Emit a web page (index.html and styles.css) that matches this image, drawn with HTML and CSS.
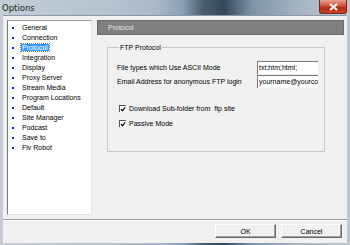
FILE: index.html
```html
<!DOCTYPE html>
<html lang="en">
<head>
    <meta charset="UTF-8">
    <title>Options</title>
    <link rel="stylesheet" href="styles.css">
</head>
<body>
    <div class="window">
        <!-- title bar -->
        <div class="titlebar">
            <span class="title">Options</span>
            <span class="close-btn">
                <svg width="9" height="8" viewBox="0 0 9 8"><path d="M1 1 L8 7 M8 1 L1 7" stroke="#fff" stroke-width="2"/></svg>
            </span>
        </div>
        <div class="client">
            <div class="main">
                <!-- page list -->
                <ul class="nav">
                    <li>General</li>
                    <li>Connection</li>
                    <li class="active"><span>Protocol</span></li>
                    <li>Integration</li>
                    <li>Display</li>
                    <li>Proxy Server</li>
                    <li>Stream Media</li>
                    <li>Program Locations</li>
                    <li>Default</li>
                    <li>Site Manager</li>
                    <li>Podcast</li>
                    <li>Save to</li>
                    <li>Flv Robot</li>
                </ul>
                <!-- page -->
                <div class="panel">
                    <div class="panel-head">Protocol</div>
                    <fieldset class="group">
                        <legend>FTP Protocol</legend>
                        <div class="field-row">
                            <label>File types which Use ASCII Mode</label>
                            <div class="input">txt;htm;html;</div>
                        </div>
                        <div class="field-row">
                            <label>Email Address for anonymous FTP login</label>
                            <div class="input">yourname@yourco</div>
                        </div>
                        <div class="check-row first">
                            <span class="check"><svg width="7" height="7" viewBox="0 0 7 7"><path d="M1 3 L3 5 L6 1" stroke="#000" stroke-width="1.4" fill="none"/></svg></span>
                            <span>Download Sub-folder from&nbsp; ftp site</span>
                        </div>
                        <div class="check-row">
                            <span class="check"><svg width="7" height="7" viewBox="0 0 7 7"><path d="M1 3 L3 5 L6 1" stroke="#000" stroke-width="1.4" fill="none"/></svg></span>
                            <span>Passive Mode</span>
                        </div>
                    </fieldset>
                </div>
            </div>
            <div class="separator"></div>
            <div class="buttons">
                <button class="btn">OK</button>
                <button class="btn">Cancel</button>
            </div>
        </div>
    </div>
</body>
</html>
```

FILE: styles.css
```css
/*global*/
* {
    margin: 0;
    padding: 0;
    box-sizing: border-box;
}

body {
    width: 350px;
    height: 245px;
    overflow: hidden;
    font-family: "Liberation Sans", Arial, sans-serif;
    font-size: 7px;
    color: #000;
}

/*window*/
.window {
    width: 350px;
    height: 245px;
    display: flex;
    flex-direction: column;
    background: linear-gradient(90deg, #c3ccd6 0%, #b7c3cf 30%, #a9b8c8 45%, #8aa0b6 52%, #4b5d70 58%, #34465a 64%, #7f93a8 72%, #a6b4c2 85%, #c0c9d2 100%);
    padding: 0 3px 2px 3px;
}

.titlebar {
    height: 15px;
    display: flex;
    align-items: center;
    justify-content: space-between;
    margin: 0 -3px;
    padding-left: 2px;
}

.title {
    font-family: "DejaVu Sans", sans-serif;
    font-size: 8.5px;
    color: #1e1e1e;
}

.close-btn {
    width: 28px;
    height: 14px;
    margin-right: 3px;
    align-self: flex-start;
    display: flex;
    align-items: center;
    justify-content: center;
    background: linear-gradient(#e8a191 0%, #d0533a 45%, #bb2a12 60%, #c8432c 100%);
    border: 1px solid #6b2a20;
    border-top: 0;
    border-radius: 0 0 3px 3px;
}

.client {
    flex: 1;
    background: #f0f0f0;
    display: flex;
    flex-direction: column;
    padding-top: 4px;
    border-top: 1px solid #8b97a3;
}

.main {
    display: flex;
    height: 195px;
}

/*nav list*/
.nav {
    list-style: none;
    width: 85px;
    margin-left: 4px;
    background: #fff;
    border-left: 1px solid #7a7a7a;
    border-top: 1px solid #a0a0a0;
    border-right: 1px solid #e3e3e3;
    border-bottom: 1px solid #e3e3e3;
    padding-top: 2px;
}

.nav li {
    height: 10px;
    line-height: 10px;
    padding-left: 14px;
    position: relative;
    white-space: nowrap;
}

.nav li::before {
    content: "";
    position: absolute;
    left: 4px;
    top: 4px;
    width: 2px;
    height: 2px;
    background: #1028c8;
}

.nav li.active span {
    background: #3399ff;
    color: #fff;
    outline: 1px dotted #777;
    padding: 0 1px;
    margin-left: -1px;
}

/*panel*/
.panel {
    flex: 1;
    margin-left: 5px;
    margin-right: 3px;
}

.panel-head {
    height: 15px;
    background: #7f7f7f;
    border: 1px solid #6a6a6a;
    color: #e6e6e6;
    padding-left: 10px;
    line-height: 13px;
}

.group {
    margin: 9px 19px 0 10px;
    height: 108px;
    border: 1px solid #c8c8c8;
    padding: 10px 0 0 9px;
}

.group legend {
    padding: 0 1px;
    margin-left: 2px;
}

.field-row {
    display: flex;
    align-items: center;
    height: 13px;
    margin-bottom: 1px;
}

.field-row label {
    width: 140px;
    white-space: nowrap;
}

.input {
    width: 61px;
    height: 13px;
    background: #fff;
    border-left: 1px solid #7a7a7a;
    border-top: 1px solid #7a7a7a;
    padding-left: 1px;
    line-height: 11px;
    overflow: hidden;
    white-space: nowrap;
}

.check-row {
    display: flex;
    align-items: center;
    gap: 3px;
    margin-left: 2px;
    margin-top: 6px;
    height: 9px;
}

.check-row.first {
    margin-top: 16px;
}

.check {
    width: 7px;
    height: 7px;
    background: #fff;
    border-left: 1px solid #555;
    border-top: 1px solid #555;
    display: flex;
}

/*footer*/
.separator {
    height: 2px;
    margin: 4px 0 0 0;
    border-top: 1px solid #a0a0a0;
    border-bottom: 1px solid #fff;
}

.buttons {
    flex: 1;
    display: flex;
    justify-content: flex-end;
    align-items: flex-start;
    gap: 5px;
    padding: 3px 5px 0 0;
}

.btn {
    width: 61px;
    height: 14px;
    font-family: "Liberation Sans", Arial, sans-serif;
    font-size: 7px;
    background: #f0f0f0;
    border: 1px solid;
    border-color: #fff #696969 #696969 #fff;
    box-shadow: inset -1px -1px 0 #a0a0a0;
}
```
